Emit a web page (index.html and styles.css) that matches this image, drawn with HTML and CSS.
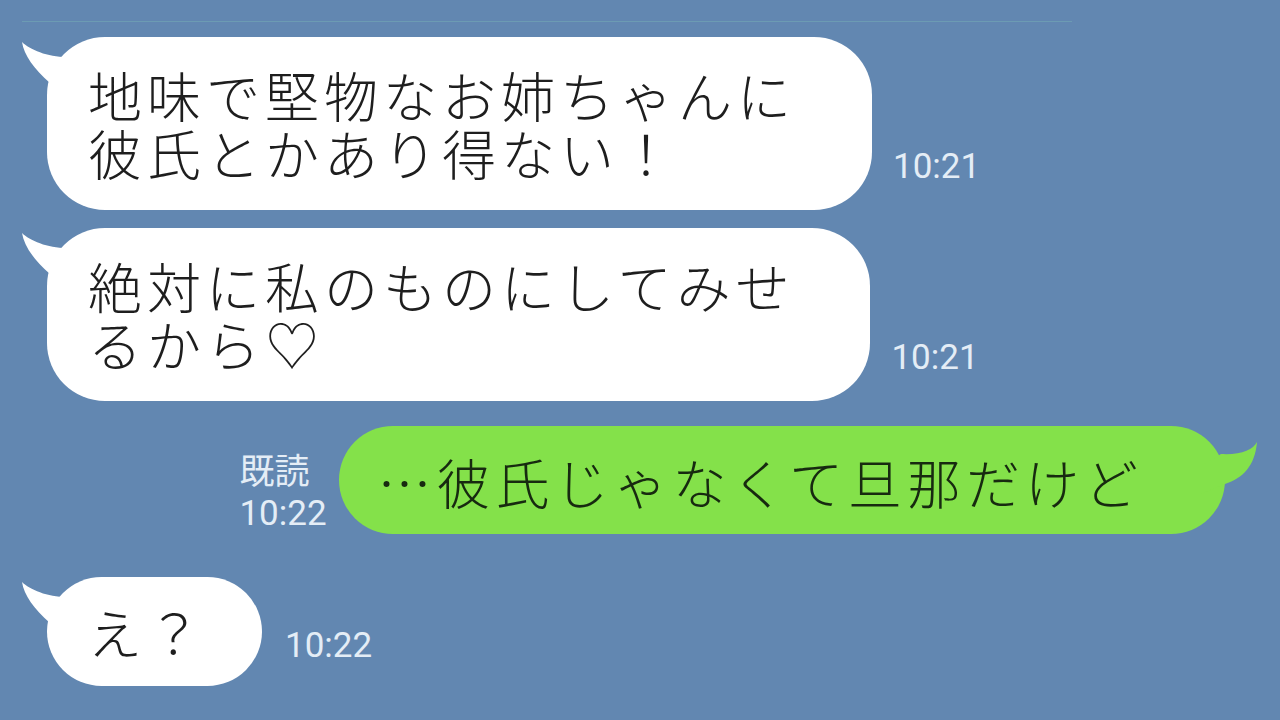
FILE: index.html
```html
<!DOCTYPE html>
<html lang="ja">
<head>
    <meta charset="UTF-8">
    <meta name="viewport" content="width=device-width, initial-scale=1.0">
    <title>トーク</title>
    <link rel="stylesheet" href="styles.css">
</head>
<body>
    <div class="rule"></div>

    <div class="chat">
        <div class="row row-first">
            <div class="bubble">
                <svg class="tail-left" viewBox="0 0 60 60" width="60" height="60"><path d="M2 5 C10 13 30 21 50 20 L58 58 L30 58 L30 46 C14 32 4 18 2 5 Z"/></svg>
                <span class="line">地味で堅物なお姉ちゃんに</span>
                <span class="line">彼氏とかあり得ない！</span>
            </div>
            <span class="time">10:21</span>
        </div>

        <div class="row row-second">
            <div class="bubble">
                <svg class="tail-left" viewBox="0 0 60 60" width="60" height="60"><path d="M2 5 C10 13 30 21 50 20 L58 58 L30 58 L30 46 C14 32 4 18 2 5 Z"/></svg>
                <span class="line">絶対に私のものにしてみせ</span>
                <span class="line">るから♡</span>
            </div>
            <span class="time">10:21</span>
        </div>

        <div class="row row-mine">
            <div class="read">
                <span>既読</span>
                <span>10:22</span>
            </div>
            <div class="bubble bubble-mine">
                <svg class="tail-right" viewBox="0 0 60 70" width="60" height="70"><path d="M58 16 C54 24 42 29 22 28 L2 40 L2 68 L26 58 C44 52 56 40 58 16 Z"/></svg>
                <span class="line">…彼氏じゃなくて旦那だけど</span>
            </div>
        </div>

        <div class="row row-last">
            <div class="bubble bubble-short">
                <svg class="tail-left" viewBox="0 0 60 60" width="60" height="60"><path d="M2 5 C10 13 30 21 50 20 L58 58 L30 58 L30 46 C14 32 4 18 2 5 Z"/></svg>
                <span class="line">え？</span>
            </div>
            <span class="time time-last">10:22</span>
        </div>
    </div>
</body>
</html>
```

FILE: styles.css
```css
body {
    margin: 0;
    height: 720px;
    overflow: hidden;
    background-color: #6287b1;
    font-family: "Noto Sans CJK JP", "Noto Sans", sans-serif;
}
.rule {
    margin: 21px 208px 0 22px;
    border-top: 1px solid #6c9bb3;
}
.chat {
    display: flex;
    flex-direction: column;
    padding-left: 47px;
}
.row {
    display: flex;
    align-items: flex-end;
}
.row-first {
    margin-top: 15px;
}
.row-second {
    margin-top: 18px;
}
.row-mine {
    margin-top: 25px;
    justify-content: flex-end;
    margin-right: 55px;
}
.row-last {
    margin-top: 43px;
}
.bubble {
    position: relative;
    background-color: #ffffff;
    color: #1e1e1e;
    font-size: 54px;
    font-weight: 300;
    line-height: 58px;
    letter-spacing: 5px;
    white-space: nowrap;
    padding: 29px 76px 28px 41px;
    border-radius: 58px;
}
.line {
    display: block;
    height: 58px;
}
.bubble-short {
    padding: 26px 56px 25px 41px;
    border-radius: 55px;
}
.bubble-mine {
    background-color: #84e14a;
    color: #172a10;
    padding: 27px 82px 23px 39px;
    border-radius: 54px;
}
.tail-left {
    position: absolute;
    left: -27px;
    top: 0;
    fill: #ffffff;
}
.tail-right {
    position: absolute;
    right: -34px;
    top: 0;
    fill: #84e14a;
}
.time {
    font-family: Roboto, "Noto Sans", sans-serif;
    font-size: 35px;
    line-height: 40px;
    color: #e4edf6;
    margin: 0 0 23px 21px;
}
.time-last {
    margin-bottom: 20px;
    margin-left: 23px;
}
.read {
    display: flex;
    flex-direction: column;
    font-family: Roboto, "Noto Sans CJK JP", sans-serif;
    font-size: 35px;
    line-height: 41px;
    color: #e4edf6;
    margin-right: 12px;
}
```
